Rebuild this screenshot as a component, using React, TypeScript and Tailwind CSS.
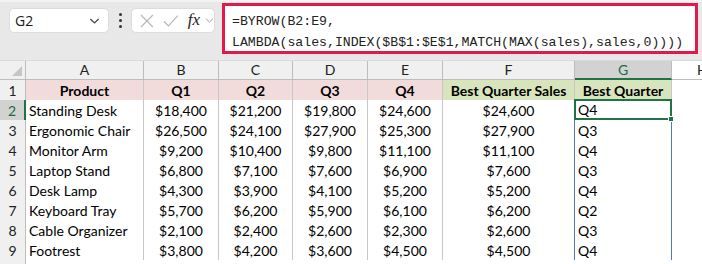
import React from 'react';

const rows = [
  ['Standing Desk', '$18,400', '$21,200', '$19,800', '$24,600', '$24,600', 'Q4'],
  ['Ergonomic Chair', '$26,500', '$24,100', '$27,900', '$25,300', '$27,900', 'Q3'],
  ['Monitor Arm', '$9,200', '$10,400', '$9,800', '$11,100', '$11,100', 'Q4'],
  ['Laptop Stand', '$6,800', '$7,100', '$7,600', '$6,900', '$7,600', 'Q3'],
  ['Desk Lamp', '$4,300', '$3,900', '$4,100', '$5,200', '$5,200', 'Q4'],
  ['Keyboard Tray', '$5,700', '$6,200', '$5,900', '$6,100', '$6,200', 'Q2'],
  ['Cable Organizer', '$2,100', '$2,400', '$2,600', '$2,300', '$2,600', 'Q3'],
  ['Footrest', '$3,800', '$4,200', '$3,600', '$4,500', '$4,500', 'Q4'],
];

const cols = ['A', 'B', 'C', 'D', 'E', 'F', 'G'];
const grid = 'grid grid-cols-[26px_118px_75px_74px_75px_75px_132px_97px_1fr]';

const Chevron = ({ className }: { className?: string }) => (
  <svg viewBox="0 0 12 8" className={className} fill="none" stroke="currentColor" strokeWidth="1.3">
    <path d="M1.5 1.8 6 6.2l4.5-4.4" />
  </svg>
);

const FormulaBar = () => (
  <div className="flex items-start h-[60px] bg-[#e8e8e8] border-t-[2px] border-[#f3f3f3]">
    <div className="ml-[9px] mt-[6px] w-[100px] h-[25px] bg-white rounded-[5px] border border-[#dcdcdc] flex items-center pl-[5px] pr-[8px]">
      <span className="text-[14px] text-[#1a1a1a] flex-1 font-['Open_Sans',sans-serif]">G2</span>
      <Chevron className="w-[11px] h-[8px] text-[#444]" />
    </div>
    <div className="w-[22px] mt-[11px] flex flex-col items-center gap-[3px]">
      <span className="w-[3px] h-[3px] bg-[#333] rounded-full" />
      <span className="w-[3px] h-[3px] bg-[#333] rounded-full" />
      <span className="w-[3px] h-[3px] bg-[#333] rounded-full" />
    </div>
    <div className="mt-[6px] w-[84px] h-[25px] bg-white rounded-[5px] border border-[#dcdcdc] flex items-center pl-[8px] gap-[9px]">
      <svg viewBox="0 0 14 14" className="w-[14px] h-[14px]" fill="none" stroke="#b8b8b8" strokeWidth="1.2">
        <path d="M1 1l12 12M13 1 1 13" />
      </svg>
      <svg viewBox="0 0 16 14" className="w-[16px] h-[14px]" fill="none" stroke="#b8b8b8" strokeWidth="1.2">
        <path d="M1 7.5 5.5 12 15 1.5" />
      </svg>
      <span className="italic text-[17px] leading-none text-[#222] font-['Liberation_Serif',serif] -mt-[2px]">fx</span>
      <Chevron className="w-[9px] h-[7px] text-[#999] -ml-[4px]" />
    </div>
    <div className="ml-[7px] mt-[1px] w-[476px] h-[51px] bg-white border-[3px] border-[#e3194b] pl-[7px] pt-[5px] font-['Liberation_Mono',monospace] text-[13.2px] leading-[21px] text-[#222] whitespace-pre">
      <div>=BYROW(B2:E9,</div>
      <div>LAMBDA(sales,INDEX($B$1:$E$1,MATCH(MAX(sales),sales,0))))</div>
    </div>
  </div>
);

const Sheet = () => (
  <div className="font-['Lato',sans-serif] text-[14px] text-black">
    <div className={`${grid} h-[20px] bg-[#f0f0f0] border-t border-[#dadada]`}>
      <div className="border-r border-b border-[#bdbdbd] relative">
        <svg viewBox="0 0 10 10" className="absolute right-[3px] bottom-[3px] w-[10px] h-[10px]">
          <path d="M10 0v10H0z" fill="#c6c6c6" />
        </svg>
      </div>
      {cols.map((c) =>
        c === 'G' ? (
          <div key={c} className="bg-[#d2d2d2] border-r border-[#bdbdbd] border-b-[2px] border-b-[#217346] text-[#1e6b41] flex items-center justify-center leading-none">
            {c}
          </div>
        ) : (
          <div key={c} className="border-r border-b border-[#bdbdbd] text-[#222] flex items-center justify-center leading-none">
            {c}
          </div>
        )
      )}
      <div className="bg-white border-b border-[#bdbdbd] text-[#222] flex items-center pl-[25px] leading-none">H</div>
    </div>

    <div className={`${grid} h-[20px]`}>
      <div className="bg-[#f0f0f0] border-r border-b border-[#bdbdbd] flex items-center justify-center text-[#222]">1</div>
      {['Product', 'Q1', 'Q2', 'Q3', 'Q4'].map((h) => (
        <div key={h} className="bg-[#f2dcdb] border-r border-b border-[#c8c8c8] font-bold flex items-center justify-center">
          {h}
        </div>
      ))}
      <div className="bg-[#d8e4bc] border-r border-b border-[#c8c8c8] font-bold flex items-center justify-center">Best Quarter Sales</div>
      <div className="bg-[#d8e4bc] border-r border-b border-[#c8c8c8] font-bold flex items-center justify-center">Best Quarter</div>
      <div className="bg-white" />
    </div>

    {rows.map((r, i) => {
      const n = i + 2;
      const first = i === 0;
      const last = i === rows.length - 1;
      return (
        <div key={n} className={`${grid} h-[20px]`}>
          {first ? (
            <div className="bg-[#d2d2d2] border-r-[2px] border-r-[#217346] border-b border-[#bdbdbd] flex items-center justify-center text-[#1e6b41]">{n}</div>
          ) : (
            <div className="bg-[#f0f0f0] border-r border-b border-[#bdbdbd] flex items-center justify-center text-[#222]">{n}</div>
          )}
          <div className="bg-white border-r border-b border-[#c8c8c8] flex items-center pl-[3px] whitespace-nowrap">{r[0]}</div>
          {r.slice(1, 6).map((v, j) => (
            <div key={j} className="bg-white border-r border-b border-[#c8c8c8] flex items-center justify-center">
              {v}
            </div>
          ))}
          {first ? (
            <div className="bg-white border-[2px] border-[#217346] -ml-[1px] -mt-[1px] h-[21px] flex items-center pl-[2px] relative">
              {r[6]}
              <span className="absolute -right-[4px] -bottom-[4px] w-[6px] h-[6px] bg-[#217346] border border-white" />
            </div>
          ) : (
            <div className={`bg-white border-l border-r border-[#4a78c2] -ml-[1px] ${last ? 'border-b border-b-[#4a78c2]' : 'border-b border-b-[#c8c8c8]'} flex items-center pl-[3px]`}>
              {r[6]}
            </div>
          )}
          <div className="bg-white" />
        </div>
      );
    })}

    <div className={`${grid} h-[20px]`}>
      <div className="bg-[#f0f0f0] border-r border-[#bdbdbd]" />
      <div className="bg-white col-span-8" />
    </div>
  </div>
);

export default function App() {
  return (
    <div className="w-[702px] h-[264px] overflow-hidden bg-white">
      <FormulaBar />
      <Sheet />
    </div>
  );
}
